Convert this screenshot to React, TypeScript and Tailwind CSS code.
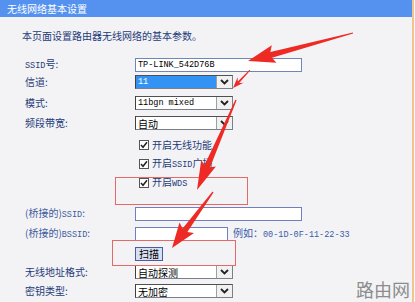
import React from "react";

const LABEL = "w-[110px] shrink-0 text-[10px] leading-[12px] text-[#1f3b78]";
const BLABEL = "w-[110px] shrink-0 text-[10px] leading-[12px] text-[#3f5c9c]";

function M({ children }: { children: React.ReactNode }) {
  return <span className="font-['Liberation_Mono',monospace] text-[8.5px]">{children}</span>;
}

function Chevron() {
  return (
    <svg width="9" height="6" viewBox="0 0 9 6">
      <path d="M1 1 L4.5 4.5 L8 1" fill="none" stroke="#222" strokeWidth="1.8" />
    </svg>
  );
}

function Select({ text, highlight }: { text: React.ReactNode; highlight?: boolean }) {
  return (
    <div className="flex h-[14px] w-[98px] border border-[#7b7f88] border-l-[#404040] border-t-[#505050] bg-white">
      <div
        className={
          highlight
            ? "flex flex-1 items-center bg-[#3393f5] pl-[2px] text-white"
            : "flex flex-1 items-center pl-[2px] text-black"
        }
      >
        {text}
      </div>
      <div className="flex w-[16px] items-center justify-center border-l border-[#9aa0a8] bg-[#f1f1f1]">
        <Chevron />
      </div>
    </div>
  );
}

function Check({ label }: { label: React.ReactNode }) {
  return (
    <div className="flex items-center pl-[4px]">
      <div className="flex h-[10px] w-[10px] items-center justify-center border border-[#555] bg-white">
        <svg width="8" height="8" viewBox="0 0 8 8">
          <path d="M1 4 L3 6.3 L7 1.2" fill="none" stroke="#222" strokeWidth="1.5" />
        </svg>
      </div>
      <span className="ml-[3px] text-[10px] leading-[12px] text-[#1f3b78]">{label}</span>
    </div>
  );
}

function arrow(tx: number, ty: number, px: number, py: number, headL: number, headW: number, w0: number, w1: number) {
  const dx = px - tx;
  const dy = py - ty;
  const len = Math.hypot(dx, dy);
  const ux = dx / len;
  const uy = dy / len;
  const nx = -uy;
  const ny = ux;
  const bx = px - ux * headL;
  const by = py - uy * headL;
  const pts = [
    [tx + nx * w0, ty + ny * w0],
    [bx + nx * w1, by + ny * w1],
    [bx + nx * headW - ux * 3, by + ny * headW - uy * 3],
    [px, py],
    [bx - nx * headW - ux * 3, by - ny * headW - uy * 3],
    [bx - nx * w1, by - ny * w1],
    [tx - nx * w0, ty - ny * w0],
  ];
  return pts.map((p) => `${p[0].toFixed(1)},${p[1].toFixed(1)}`).join(" ");
}

export default function App() {
  return (
    <div className="relative h-[302px] w-[415px] overflow-hidden bg-[#fbfbfb] font-['Noto_Sans_CJK_SC',sans-serif]">
      <div className="flex h-[302px] w-[414px] flex-col border-r-2 border-[#f1c58c] bg-[#f3f3f6]">
        <div className="flex h-[17px] w-[412px] items-center bg-[#5592ef] pl-[7px] text-[10px] leading-[12px] text-white">
          无线网络基本设置
        </div>
        <div className="flex flex-col pl-[25px]">
          <div className="-ml-[3px] mt-[13px] h-[12px] text-[10px] leading-[12px] text-[#1f3b78]">
            本页面设置路由器无线网络的基本参数。
          </div>

          <div className="mt-[16px] flex h-[14px] items-center">
            <div className={LABEL}>
              <M>SSID</M>号:
            </div>
            <div className="flex h-[14px] w-[167px] items-center border border-[#6f86b6] bg-white pl-[2px] text-black">
              <M>TP-LINK_542D76B</M>
            </div>
          </div>

          <div className="mt-[3px] flex h-[14px] items-center">
            <div className={LABEL}>信道:</div>
            <Select text={<M>11</M>} highlight />
          </div>

          <div className="mt-[7px] flex h-[14px] items-center">
            <div className={LABEL}>模式:</div>
            <Select text={<M>11bgn mixed</M>} />
          </div>

          <div className="mt-[6px] flex h-[14px] items-center">
            <div className={LABEL}>频段带宽:</div>
            <Select text={<span className="text-[10px]">自动</span>} />
          </div>

          <div className="mt-[8px] flex h-[14px] items-center">
            <div className={LABEL}></div>
            <Check label="开启无线功能" />
          </div>
          <div className="mt-[5px] flex h-[14px] items-center">
            <div className={LABEL}></div>
            <Check
              label={
                <>
                  开启<M>SSID</M>广播
                </>
              }
            />
          </div>
          <div className="mt-[5px] flex h-[14px] items-center">
            <div className={LABEL}></div>
            <Check
              label={
                <>
                  开启<M>WDS</M>
                </>
              }
            />
          </div>

          <div className="mt-[17px] flex h-[14px] items-center">
            <div className={BLABEL}>
              (桥接的)<M>SSID</M>:
            </div>
            <div className="h-[14px] w-[167px] border border-[#6f7fc0] bg-white" />
          </div>

          <div className="mt-[6px] flex h-[14px] items-center">
            <div className={BLABEL}>
              (桥接的)<M>BSSID</M>:
            </div>
            <div className="h-[14px] w-[93px] border border-[#6f7fc0] bg-white" />
            <span className="ml-[5px] text-[10px] leading-[12px] text-[#3a5ca6]">
              例如：<M>00-1D-0F-11-22-33</M>
            </span>
          </div>

          <div className="mt-[6px] flex h-[14px] items-center">
            <div className={LABEL}></div>
            <div className="flex h-[14px] w-[28px] items-center justify-center border border-[#4a5c9a] bg-[#d9dff2] text-[10px] leading-[12px] text-black">
              扫描
            </div>
          </div>

          <div className="mt-[4px] flex h-[14px] items-center">
            <div className={LABEL}>无线地址格式:</div>
            <Select text={<span className="text-[10px]">自动探测</span>} />
          </div>

          <div className="mt-[5px] flex h-[14px] items-center">
            <div className={LABEL}>密钥类型:</div>
            <Select text={<span className="text-[10px]">无加密</span>} />
          </div>
        </div>
      </div>

      {/* annotation boxes */}
      <div className="absolute left-[115px] top-[177px] h-[28px] w-[133px] border border-[#e46a6a]" />
      <div className="absolute left-[112px] top-[240px] h-[26px] w-[124px] border border-[#e46a6a]" />

      {/* annotation arrows */}
      <svg className="absolute left-0 top-0" width="415" height="302" viewBox="0 0 415 302">
        <polygon points={arrow(353, 33, 248, 61, 24, 9, 0.5, 3)} fill="#ee2a24" />
        <polygon points={arrow(250, 70, 233, 88, 8, 4, 0.5, 1)} fill="#ee2a24" />
        <polygon points={arrow(236, 100, 197, 190, 26, 8, 0.6, 3)} fill="#ee2a24" />
        <polygon points={arrow(213, 192, 172, 248, 22, 9, 0.6, 3)} fill="#ee2a24" />
      </svg>

      <div className="absolute bottom-[3px] right-[5px] text-[18px] leading-[20px] text-[#8c8c8c]">
        路由网
      </div>
    </div>
  );
}
